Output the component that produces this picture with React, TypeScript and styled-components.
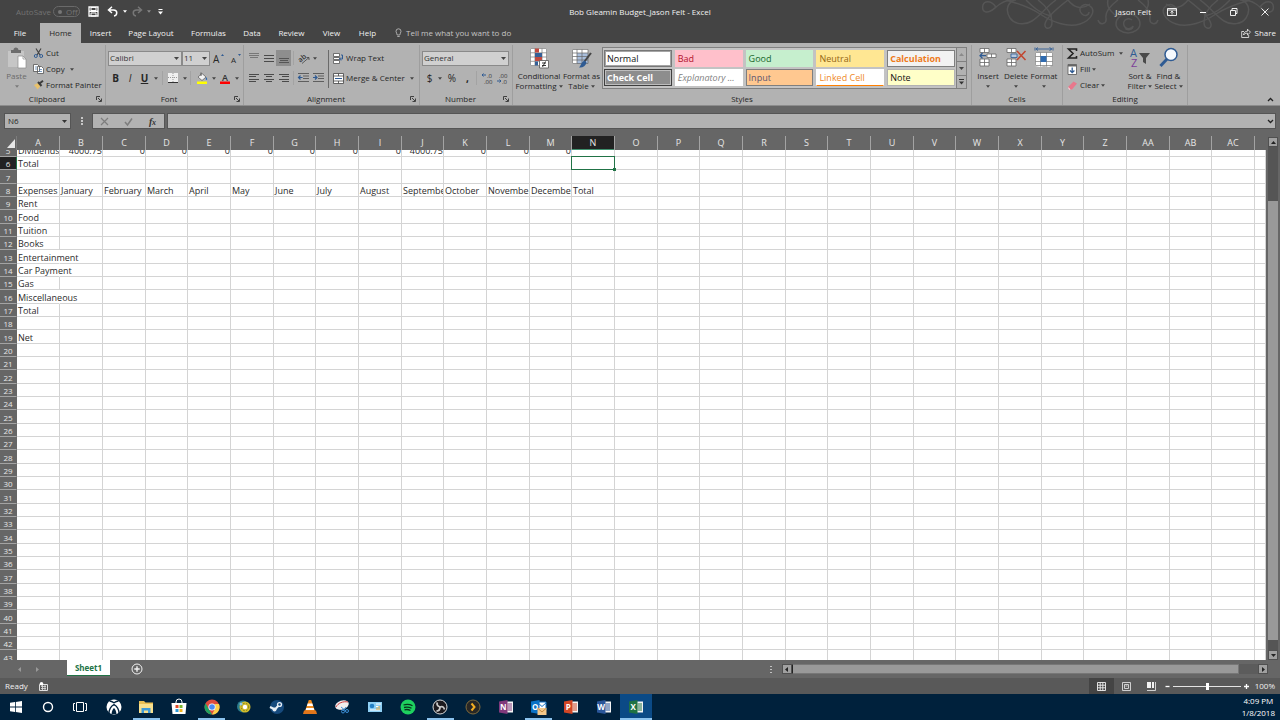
import React from "react";
import styled, { createGlobalStyle, css } from "styled-components";

const ui = `"Open Sans", "Noto Sans", sans-serif`;

const Global = createGlobalStyle`
  *, *::before, *::after { box-sizing: border-box; }
  html, body { margin: 0; height: 100%; }
  body { font-family: ${ui}; font-size: 8px; line-height: 12px; color: #262626; background: #666; overflow: hidden; }
  button, select, input { font: inherit; color: inherit; margin: 0; padding: 0; border: 0; background: none; border-radius: 0; }
  svg { display: block; flex: none; overflow: visible; }
`;

const Shell = styled.div`
  display: flex;
  flex-direction: column;
  height: 100vh;
  min-width: 0;
`;

/* ---------- title and tabs ---------- */
const Header = styled.header`
  position: relative;
  flex: none;
  background: #444;
  color: #f1f1f1;
`;
const Swirl = styled.svg`
  position: absolute;
  top: 0;
  right: 0;
  overflow: hidden;
  pointer-events: none;
`;
const TitleBar = styled.div`
  position: relative;
  display: grid;
  grid-template-columns: 1fr auto 1fr;
  align-items: center;
  height: 23px;
`;
const QuickAccess = styled.div`
  display: flex;
  align-items: center;
  padding-left: 16px;
  color: #737373;
`;
const AutoSave = styled.button`
  display: flex;
  align-items: center;
  gap: 2px;
  margin-right: 4px;
`;
const Toggle = styled.span`
  display: flex;
  align-items: center;
  gap: 4px;
  height: 11px;
  width: 27px;
  padding-left: 4px;
  border: 1px solid #6a6a6a;
  border-radius: 6px;
  line-height: 9px;
`;
const Dot = styled.i`
  width: 4px;
  height: 4px;
  border-radius: 50%;
  background: #777;
`;
const QuickButton = styled.button<{ $w: number }>`
  display: flex;
  justify-content: center;
  align-items: center;
  width: ${(p) => p.$w}px;
  height: 18px;
`;
const WindowTitle = styled.h1`
  margin: 0;
  font-size: 8px;
  font-weight: 400;
`;
const WindowControls = styled.div`
  display: flex;
  align-items: center;
  justify-content: flex-end;
`;
const UserName = styled.button`
  margin-right: 5px;
`;
const WindowButton = styled.button`
  display: flex;
  align-items: center;
  justify-content: center;
  width: 31px;
  height: 22px;
`;
const TabRow = styled.nav`
  position: relative;
  display: flex;
  align-items: stretch;
  height: 20px;
`;
const Tab = styled.button<{ $w: number; $active?: boolean }>`
  width: ${(p) => p.$w}px;
  white-space: nowrap;
  ${(p) => p.$active && css`background: #b2b2b2; color: #262626;`}
`;
const TellMe = styled.button`
  display: flex;
  align-items: center;
  gap: 4px;
  margin-left: 9px;
  color: #c4c4c4;
`;
const Share = styled.button`
  display: flex;
  align-items: center;
  gap: 4px;
  margin-left: auto;
  margin-right: 4px;
`;

/* ---------- ribbon ---------- */
const Ribbon = styled.div`
  display: flex;
  flex: none;
  height: 63px;
  padding-top: 2px;
  background: #b2b2b2;
  border-bottom: 1px solid #8c8c8c;
`;
const Group = styled.section<{ $w: number }>`
  display: flex;
  flex-direction: column;
  flex: none;
  width: ${(p) => p.$w}px;
  border-right: 1px solid #9e9e9e;
`;
const GroupBody = styled.div<{ $pad?: number }>`
  display: flex;
  flex: 1;
  padding-left: ${(p) => p.$pad ?? 0}px;
`;
const GroupFoot = styled.div<{ $launch?: boolean }>`
  display: grid;
  grid-template-columns: 1fr ${(p) => (p.$launch ? "11px" : "0px")};
  align-items: center;
  height: 12px;
  text-align: center;
`;
const Launcher = styled.button`
  display: flex;
  padding: 2px;
`;
const Stack = styled.div<{ $w?: number; $top?: number }>`
  display: flex;
  flex-direction: column;
  width: ${(p) => (p.$w ? p.$w + "px" : "auto")};
  padding-top: ${(p) => p.$top ?? 0}px;
`;
const Row = styled.div<{ $h: number }>`
  display: flex;
  align-items: center;
  height: ${(p) => p.$h}px;
`;
const Command = styled.button`
  display: flex;
  align-items: center;
  gap: 2px;
  height: 16px;
  white-space: nowrap;
`;
const CommandCaret = styled.span`
  margin-left: 3px;
`;
const IconButton = styled.button<{ $w: number; $on?: boolean }>`
  display: flex;
  align-items: center;
  justify-content: center;
  flex: none;
  width: ${(p) => p.$w}px;
  height: 16px;
  background: ${(p) => (p.$on ? "#8e8e8e" : "none")};
`;
const Glyph = styled(IconButton)<{ $italic?: boolean; $under?: boolean; $bold?: boolean }>`
  font-size: 10px;
  font-weight: ${(p) => (p.$bold ? 700 : 400)};
  font-style: ${(p) => (p.$italic ? "italic" : "normal")};
  text-decoration: ${(p) => (p.$under ? "underline" : "none")};
`;
const Sep = styled.i<{ $dark?: boolean }>`
  flex: none;
  width: 1px;
  height: ${(p) => (p.$dark ? 38 : 14)}px;
  margin: 0 2px;
  background: ${(p) => (p.$dark ? "#6a6a6a" : "#a3a3a3")};
`;
const BigButton = styled.button<{ $w: number; $dim?: boolean }>`
  display: flex;
  flex-direction: column;
  align-items: center;
  flex: none;
  width: ${(p) => p.$w}px;
  padding-top: 2px;
  line-height: 10px;
  white-space: nowrap;
  color: ${(p) => (p.$dim ? "#6b6b6b" : "#262626")};
  svg { margin-bottom: 2px; }
`;
const BigLine = styled.span`
  display: flex;
  align-items: center;
  gap: 2px;
  height: 10px;
  svg { margin: 0; }
`;
const SelectBox = styled.span<{ $w: number }>`
  position: relative;
  display: block;
  width: ${(p) => p.$w}px;
  height: 15px;
  border: 1px solid #8a8a8a;
  background: #d0d0d0;
  select {
    appearance: none;
    display: block;
    width: 100%;
    height: 13px;
    padding: 0 10px 0 1px;
    color: #333;
  }
  svg {
    position: absolute;
    right: 2px;
    top: 5px;
    pointer-events: none;
  }
`;

/* ---------- style gallery ---------- */
const Gallery = styled.div`
  display: flex;
  flex: none;
  width: 365px;
  height: 42px;
  margin-top: 2px;
  border: 1px solid #808080;
`;
const Swatches = styled.div`
  display: grid;
  grid-template-columns: repeat(5, 1fr);
  grid-template-rows: 17px 17px;
  gap: 2px 3px;
  flex: 1;
  padding: 2px 1px;
  background: #c3c3c3;
`;
const Swatch = styled.button<{ $bg: string; $fg: string; $edge?: string; $bold?: boolean; $italic?: boolean; $under?: boolean; $ring?: string }>`
  overflow: hidden;
  padding: 0 2px;
  border: 1px solid ${(p) => p.$edge ?? p.$bg};
  ${(p) => p.$under && css`border-bottom-color: #ff8001;`}
  ${(p) => p.$ring && css`box-shadow: inset 0 0 0 1px ${p.$ring};`}
  background: ${(p) => p.$bg};
  color: ${(p) => p.$fg};
  font-size: 9px;
  line-height: 13px;
  font-weight: ${(p) => (p.$bold ? 700 : 400)};
  font-style: ${(p) => (p.$italic ? "italic" : "normal")};
  text-align: left;
  white-space: nowrap;
`;
const GalleryScroll = styled.div`
  display: grid;
  grid-template-rows: repeat(3, 1fr);
  width: 10px;
  border-left: 1px solid #808080;
  button {
    display: flex;
    align-items: center;
    justify-content: center;
  }
  button + button { border-top: 1px solid #808080; }
`;
const RibbonEnd = styled.div`
  display: flex;
  flex: 1;
  align-items: flex-end;
  justify-content: flex-end;
  padding: 0 6px 3px 0;
`;

/* ---------- formula bar ---------- */
const FormulaRow = styled.div`
  display: flex;
  flex: none;
  align-items: center;
  height: 30px;
  padding: 0 4px;
`;
const NameBox = styled.label`
  display: flex;
  align-items: center;
  width: 67px;
  height: 16px;
  padding: 0 3px;
  background: #b2b2b2;
  border: 1px solid #555;
  input { flex: 1; min-width: 0; outline: none; }
`;
const Grip = styled.span`
  display: flex;
  flex: none;
  justify-content: center;
  width: 21px;
`;
const FormulaTools = styled.div`
  display: flex;
  align-items: center;
  justify-content: space-around;
  width: 73px;
  height: 16px;
  margin-right: 2px;
  background: #b2b2b2;
  border: 1px solid #555;
  button { padding: 2px 6px; }
`;
const FormulaBox = styled.div`
  display: flex;
  flex: 1;
  align-items: center;
  height: 16px;
  padding-right: 1px;
  background: #b2b2b2;
  border: 1px solid #555;
  input { flex: 1; outline: none; }
`;

/* ---------- sheet ---------- */
const Work = styled.main`
  display: flex;
  flex: 1;
  min-height: 0;
`;
const SheetPane = styled.div`
  display: flex;
  flex: 1;
  flex-direction: column;
  min-width: 0;
`;
const HeadTable = styled.table`
  flex: none;
  width: 100%;
  table-layout: fixed;
  border-collapse: separate;
  border-spacing: 0;
  color: #e6e6e6;
`;
const ColHead = styled.th<{ $on?: boolean }>`
  height: 14px;
  padding: 0;
  font-weight: 400;
  font-size: 9px;
  line-height: 12px;
  border-right: 1px solid #a3a3a3;
  ${(p) => p.$on && css`background: #222; box-shadow: inset 0 -1px #3f8f6d;`}
`;
const Corner = styled.th`
  padding: 0;
  border-right: 1px solid #7c7c7c;
  svg { margin-left: auto; }
`;
const Scroller = styled.div`
  flex: 1;
  min-height: 0;
  overflow: hidden;
  background: #fff;
`;
const Cells = styled.table`
  width: 100%;
  margin-top: -6px;
  table-layout: fixed;
  border-collapse: separate;
  border-spacing: 0;
  font-size: 9px;
  line-height: 11px;
  color: #2b2b2b;
  tr { height: 13px; }
  tr:nth-child(3n) { height: 14px; }
`;
const RowHead = styled.th<{ $on?: boolean }>`
  padding: 1px 0 0;
  font-size: 8px;
  font-weight: 400;
  text-align: center;
  color: #e6e6e6;
  background: ${(p) => (p.$on ? "#222" : "#666")};
  border-bottom: 1px solid #a3a3a3;
  border-right: 1px solid ${(p) => (p.$on ? "#217346" : "#666")};
`;
const Cell = styled.td<{ $right?: boolean; $spill?: boolean; $on?: boolean }>`
  padding: 1px 0 0 1px;
  white-space: nowrap;
  overflow: ${(p) => (p.$spill || p.$on ? "visible" : "hidden")};
  text-align: ${(p) => (p.$right ? "right" : "left")};
  border-right: 1px solid ${(p) => (p.$spill ? "transparent" : "#d4d4d4")};
  border-bottom: 1px solid #d4d4d4;
  ${(p) => p.$on && css`
    position: relative;
    &::before {
      content: "";
      position: absolute;
      inset: -1px;
      border: 1px solid #217346;
    }
    &::after {
      content: "";
      position: absolute;
      right: -2px;
      bottom: -2px;
      width: 3px;
      height: 3px;
      background: #217346;
    }
  `}
`;
const VScroll = styled.div`
  display: flex;
  flex: none;
  flex-direction: column;
  width: 14px;
  padding: 1px 2px 0;
`;
const ScrollButton = styled.button`
  display: flex;
  align-items: center;
  justify-content: center;
  flex: none;
  width: 10px;
  height: 10px;
  background: #a0a0a0;
  border: 1px solid #505050;
`;
const VTrack = styled.div`
  display: grid;
  grid-template-rows: 54fr 440fr 10fr;
  flex: 1;
  background: #555;
`;
const Thumb = styled.i`
  grid-row: 2;
  background: #999;
`;

/* ---------- sheet tabs ---------- */
const SheetBar = styled.div`
  display: flex;
  flex: none;
  align-items: center;
  height: 18px;
  padding-right: 12px;
`;
const SheetNav = styled.div`
  display: flex;
  width: 67px;
  padding-left: 17px;
  gap: 13px;
`;
const SheetTab = styled.button`
  align-self: flex-start;
  width: 43px;
  height: 16px;
  background: #fff;
  border-bottom: 1px solid #217346;
  color: #217346;
  font-weight: 700;
`;
const AddSheet = styled.button`
  margin-left: 21px;
`;
const HScroll = styled.div`
  display: flex;
  align-items: center;
  width: 40%;
  margin-left: auto;
`;
const HTrack = styled.div`
  display: flex;
  flex: 1;
  height: 10px;
  background: #5c5c5c;
`;
const HThumb = styled.i`
  width: 96%;
  background: #999;
  border: 1px solid #777;
  border-left-color: #222;
`;

/* ---------- status bar ---------- */
const StatusBar = styled.footer`
  display: flex;
  flex: none;
  align-items: center;
  height: 16px;
  padding: 0 5px;
  background: #595959;
  color: #f1f1f1;
`;
const MacroButton = styled.button`
  margin-left: 11px;
`;
const Views = styled.div`
  display: flex;
  margin-left: auto;
`;
const ViewButton = styled.button<{ $on?: boolean }>`
  display: flex;
  align-items: center;
  justify-content: center;
  width: 25px;
  height: 16px;
  background: ${(p) => (p.$on ? "#444" : "none")};
`;
const Zoom = styled.input`
  appearance: none;
  width: 68px;
  height: 10px;
  margin: 0 2px;
  background: linear-gradient(#e3e3e3, #e3e3e3) center / 100% 1px no-repeat;
  &::-webkit-slider-thumb {
    appearance: none;
    width: 3px;
    height: 7px;
    background: #fff;
  }
`;
const ZoomStep = styled.button`
  display: flex;
  justify-content: center;
  width: 7px;
`;
const Percent = styled.button`
  width: 25px;
  text-align: right;
`;

/* ---------- taskbar ---------- */
const TaskBar = styled.footer`
  display: flex;
  flex: none;
  height: 26px;
  background: #00213c;
  color: #fff;
`;
const System = styled.div`
  display: flex;
  margin-right: 1px;
`;
const TaskList = styled.div`
  display: flex;
`;
const TaskButton = styled.button<{ $open?: boolean; $active?: boolean }>`
  display: flex;
  align-items: center;
  justify-content: center;
  width: 33px;
  &:nth-child(3n + 2) { width: 32px; }
  background: ${(p) => (p.$active ? "#0b4a86" : "none")};
  ${(p) => p.$open && css`
    background-image: linear-gradient(#8cc3ee, #8cc3ee);
    background-size: ${p.$active ? "100%" : "27px"} 2px;
    background-position: bottom;
    background-repeat: no-repeat;
  `}
`;
const SystemButton = styled(TaskButton)`
  width: 32px;
`;
const Clock = styled.time`
  margin-left: auto;
  padding: 1px 5px 0 0;
  line-height: 12px;
  text-align: center;
  span { display: block; }
`;

/* ---------- drawings ---------- */
const Caret = ({ c = "#444", w = 5 }: { c?: string; w?: number }) => (
  <svg width={w} height="3" viewBox="0 0 5 3"><path d="M0 0h5L2.500 3z" fill={c} /></svg>
);
const Box = ({ w = 12, h = 12, children }: { w?: number; h?: number; children: React.ReactNode }) => (
  <svg width={w} height={h} viewBox={`0 0 ${w} ${h}`} fill="none">{children}</svg>
);
const Lines = ({ rows, c = "#4a4a4a" }: { rows: number[][]; c?: string }) => (
  <Box w={10} h={10}>{rows.map(([x, y, w], i) => <path key={i} d={`M${x} ${y}.5h${w}`} stroke={c} />)}</Box>
);
const Foot = ({ name, launch }: { name: string; launch?: boolean }) => (
  <GroupFoot $launch={launch}>
    <span>{name}</span>
    {launch && (
      <Launcher aria-label={`${name} settings`}>
        <Box w={6} h={6}><path d="M.5 4V.5H4M2 2l3 3M5.500 2.500v3h-3" stroke="#333" strokeWidth=".9" /></Box>
      </Launcher>
    )}
  </GroupFoot>
);
const Combo = ({ w, label, value }: { w: number; label: string; value: string }) => (
  <SelectBox $w={w}>
    <select aria-label={label} defaultValue={value}><option>{value}</option></select>
    <Caret />
  </SelectBox>
);
const Office = ({ c, t }: { c: string; t: string }) => (
  <Box w={16} h={16}>
    <path d="M8 2.500h7v11H8z" fill="#f4f4f4" />
    <path d="M9.500 5h4.500M9.500 7h4.500M9.500 9h4.500M9.500 11h4.500" stroke={c} strokeWidth="1.100" />
    <path d="M1 2.500L9.500 1v14L1 13.500z" fill={c} />
    <text x="5.200" y="11" fontSize="8" fontWeight="700" fill="#fff" textAnchor="middle" fontFamily="Open Sans, sans-serif">{t}</text>
  </Box>
);
const Flourish = () => (
  <>
    <path d="M16 8C15 4 10 1 6 2s-5 9 0 10 8-4 14-8 10-4 16-4" />
    <path d="M34 0c-8 4-8 12-4 18s14 8 22 3S66 7 76 0" />
    <path d="M26 0c10 3 22 6 34 14s28 14 40 10c12-4 16-14 10-18s-14 2-8 8c3 3 7 1 7-2" />
    <path d="M46 0c6 6 14 14 26 16M58 0c8 6 14 14 14 22 0 8-8 8-7 2S75 10 88 0M88 0c6 8 14 10 22 4" />
    <path d="M118 20c2 6 9 4 8-2s4-12 12-18M128 0c-2 8 4 12 8 16" />
    <path d="M148 14c-8 0-12 5-12 10s6 9 12 9" />
  </>
);

const tabs: [string, number][] = [
  ["File", 40], ["Home", 41], ["Insert", 39], ["Page Layout", 62], ["Formulas", 53],
  ["Data", 34], ["Review", 45], ["View", 35], ["Help", 37],
];

const letters = Array.from({ length: 29 }, (_, i) =>
  i < 26 ? String.fromCharCode(65 + i) : "A" + String.fromCharCode(39 + i));
const rowNumbers = Array.from({ length: 39 }, (_, i) => i + 5);
const months = ["January", "February", "March", "April", "May", "June", "July", "August", "September", "October", "November", "December", "Total"];
const firstColumn: Record<number, string> = {
  5: "Dividends", 6: "Total", 8: "Expenses", 9: "Rent", 10: "Food", 11: "Tuition", 12: "Books",
  13: "Entertainment", 14: "Car Payment", 15: "Gas", 16: "Miscellaneous", 17: "Total", 19: "Net",
};
const valueAt = (row: number, col: number) => {
  if (col === 0) return firstColumn[row] ?? "";
  if (row === 5 && col <= 12) return col === 1 || col === 9 ? "4000.75" : "0";
  if (row === 8 && col <= 13) return months[col - 1];
  return "";
};
const Columns = () => (
  <colgroup>
    <col style={{ width: 17 }} />
    {letters.map((l, i) => <col key={l} style={{ width: i > 0 && i % 3 === 0 ? 42 : 43 }} />)}
    <col />
  </colgroup>
);

const TitleArea = () => (
  <Header>
    <Swirl width="300" height="36" viewBox="0 0 300 36" fill="none" stroke="#555" strokeWidth="1.500">
      <Flourish />
      <g transform="translate(296 0) scale(-1 1)"><Flourish /></g>
      <path d="M152 20a5 5 0 1 0 1 6c0 4-6 5-8 2" />
    </Swirl>
    <TitleBar>
      <QuickAccess>
        <AutoSave>AutoSave<Toggle><Dot />Off</Toggle></AutoSave>
        <QuickButton $w={20} aria-label="Save">
          <Box w={11} h={11}><path d="M1 1h9v9H1z" stroke="#fff" strokeWidth="1.300" /><path d="M3 1.500h5v3H3zM3 7h5v3H3z" stroke="#fff" /><path d="M1 4.500h9v1.500H1z" fill="#fff" /></Box>
        </QuickButton>
        <QuickButton $w={18} aria-label="Undo">
          <Box w={11} h={11}><path d="M5 .8L1.500 4 5 7M2 4h4.500c4.500 0 4 5.500.5 6" stroke="#fff" strokeWidth="1.500" /></Box>
        </QuickButton>
        <QuickButton $w={7} aria-label="Undo list"><Caret c="#fff" w={4} /></QuickButton>
        <QuickButton $w={17} aria-label="Redo">
          <Box w={11} h={11}><path d="M6 .8L9.500 4 6 7M9 4H4.500C0 4 .5 9.500 4 10" stroke="#777" strokeWidth="1.500" /></Box>
        </QuickButton>
        <QuickButton $w={7} aria-label="Redo list"><Caret c="#888" w={4} /></QuickButton>
        <QuickButton $w={16} aria-label="Customize">
          <Box w={5} h={6}><path d="M.5 .5h4" stroke="#fff" /><path d="M0 2.500h5L2.500 5.500z" fill="#fff" /></Box>
        </QuickButton>
      </QuickAccess>
      <WindowTitle>Bob Gleamin Budget_Jason Felt - Excel</WindowTitle>
      <WindowControls>
        <UserName>Jason Felt</UserName>
        <WindowButton aria-label="Ribbon options"><Box w={10} h={8}><path d="M.5.5h9v7h-9zM.5 2h9M5 6.500v-3M3.500 4.500L5 3.200l1.500 1.300" stroke="#fff" strokeWidth=".9" /></Box></WindowButton>
        <WindowButton aria-label="Minimize"><Box w={8} h={8}><path d="M1 4.500h6" stroke="#fff" /></Box></WindowButton>
        <WindowButton aria-label="Restore"><Box w={8} h={8}><path d="M.5 2.500h5v5h-5zM2 2.500V.5h5v5H5.500" stroke="#fff" strokeWidth=".9" /></Box></WindowButton>
        <WindowButton aria-label="Close"><Box w={8} h={8}><path d="M.5.5l7 7M7.500.5l-7 7" stroke="#fff" strokeWidth=".9" /></Box></WindowButton>
      </WindowControls>
    </TitleBar>
    <TabRow>
      {tabs.map(([name, w]) => <Tab key={name} $w={w} $active={name === "Home"}>{name}</Tab>)}
      <TellMe>
        <Box w={7} h={10}><path d="M2.200 7C2.200 5.500 1 5 1 3.300a2.500 2.500 0 0 1 5 0C6 5 4.800 5.500 4.800 7zM2.300 8.500h2.400" stroke="#c4c4c4" strokeWidth=".8" /></Box>
        Tell me what you want to do
      </TellMe>
      <Share>
        <Box w={10} h={10}><path d="M3 3.500H.7v6h7V7M2.500 7c.3-2.500 1.800-3.800 4-3.800V1.200l3 3-3 2.800V5.200c-2 0-3 .5-4 1.800z" stroke="#f1f1f1" strokeWidth=".8" /></Box>
        Share
      </Share>
    </TabRow>
  </Header>
);

const ClipboardGroup = () => (
  <Group $w={106}>
    <GroupBody>
      <BigButton $w={33} $dim>
        <Box w={20} h={22}><path d="M1 4h16v16H1z" fill="#c6c6c6" /><path d="M4 3h2.500a2.500 2.500 0 0 1 5 0H14v3H4z" fill="#6c6c6c" /><path d="M11 9h5l3 3v9h-8z" fill="#fff" stroke="#8b8b8b" strokeWidth=".7" /><path d="M16 9v3h3" stroke="#8b8b8b" strokeWidth=".7" /></Box>
        <BigLine>Paste</BigLine><BigLine><Caret c="#7a7a7a" w={4} /></BigLine>
      </BigButton>
      <Stack>
        <Command><Box w={11} h={10}><path d="M3 .5l4 6.500M8 .5L4 7" stroke="#444" strokeWidth="1.200" /><circle cx="2.800" cy="8" r="1.500" stroke="#2f5b93" /><circle cx="8.200" cy="8" r="1.500" stroke="#2f5b93" /></Box>Cut</Command>
        <Command><Box w={11} h={10}><path d="M.5.500h4l2 2v5h-6zM4.500 2.500h4l2 2v5h-6z" fill="#fff" stroke="#555" strokeWidth=".8" /><path d="M6 5.500h3M6 7.500h3M2 3h2M2 5h2" stroke="#4472a8" strokeWidth=".7" /></Box>Copy<CommandCaret><Caret w={4} /></CommandCaret></Command>
        <Command><Box w={11} h={10}><path d="M1 5l4-2 2.500 3-3 3.500c-.7-1.500-2-3-3.500-4.500z" fill="#e9c26c" /><path d="M5 2l3.500 4M6.500 3.500L10 .8" stroke="#3c3c3c" strokeWidth="2" /></Box>Format Painter</Command>
      </Stack>
    </GroupBody>
    <Foot name="Clipboard" launch />
  </Group>
);

const FontGroup = () => (
  <Group $w={138}>
    <GroupBody $pad={2}>
      <Stack $top={4}>
        <Row $h={18}>
          <Combo w={74} label="Font" value="Calibri" />
          <Combo w={28} label="Font size" value="11" />
          <IconButton $w={18} aria-label="Grow font"><Box w={12} h={11}><text x="0" y="10" fontSize="10" fill="#262626" fontFamily="Open Sans, sans-serif">A</text><path d="M8 3l1.500-2L11 3z" fill="#2f5b93" /></Box></IconButton>
          <IconButton $w={14} aria-label="Shrink font"><Box w={11} h={11}><text x="1" y="10" fontSize="8" fill="#262626" fontFamily="Open Sans, sans-serif">A</text><path d="M8 1h3L9.500 3z" fill="#2f5b93" /></Box></IconButton>
        </Row>
        <Row $h={22}>
          <Glyph $w={15} $bold>B</Glyph><Glyph $w={14} $italic>I</Glyph><Glyph $w={15} $under $bold>U</Glyph>
          <IconButton $w={8} aria-label="Underline list"><Caret w={4} /></IconButton>
          <Sep />
          <IconButton $w={16} aria-label="Borders"><Box w={10} h={10}><path d="M0 0h10v9H0z" fill="#f0f0f0" /><path d="M5 0v9M0 4.500h10" stroke="#999" strokeDasharray="1 1" /><path d="M0 9.500h10" stroke="#333" /></Box></IconButton>
          <IconButton $w={7} aria-label="Border list"><Caret w={4} /></IconButton>
          <Sep />
          <IconButton $w={17} aria-label="Fill color"><Box w={12} h={12}><path d="M2 5l4-3.500 4 3.500-4 3.500z" fill="#f5f5f5" stroke="#555" strokeWidth=".7" /><path d="M10 5c1.500 1 1.500 3 .5 3s-1-1.500-.5-3z" fill="#2f6bb0" /><path d="M5 4V.5" stroke="#555" /><path d="M1 9.500h10v2.500H1z" fill="#ff0" /></Box></IconButton>
          <IconButton $w={7} aria-label="Fill list"><Caret w={4} /></IconButton>
          <IconButton $w={16} aria-label="Font color"><Box w={12} h={12}><text x="6" y="8.500" fontSize="9" fontWeight="600" fill="#333" textAnchor="middle" fontFamily="Open Sans, sans-serif">A</text><path d="M1 9.500h10v2.500H1z" fill="red" /></Box></IconButton>
          <IconButton $w={7} aria-label="Font color list"><Caret w={4} /></IconButton>
        </Row>
      </Stack>
    </GroupBody>
    <Foot name="Font" launch />
  </Group>
);

const AlignmentGroup = () => (
  <Group $w={176}>
    <GroupBody $pad={2}>
      <Stack $top={4} $w={80}>
        <Row $h={18}>
          <IconButton $w={15} aria-label="Top align"><Lines c="#777" rows={[[0, 0, 10], [0, 2, 10], [1, 4, 8]]} /></IconButton>
          <IconButton $w={15} aria-label="Middle align"><Lines rows={[[0, 2, 10], [0, 5, 10], [0, 8, 10]]} /></IconButton>
          <IconButton $w={15} $on aria-label="Bottom align"><Lines c="#555" rows={[[0, 5, 10], [1, 7, 8], [0, 9, 10]]} /></IconButton>
          <Sep />
          <IconButton $w={16} aria-label="Orientation"><Box w={12} h={11}><g transform="rotate(-40 4 7)"><text x="1" y="8" fontSize="7" fontWeight="600" fill="#333" fontFamily="Open Sans, sans-serif">ab</text></g><path d="M4 10.500L11 4.500M11 7V4.500H8.500" stroke="#444" strokeWidth=".8" /></Box></IconButton>
          <IconButton $w={6} aria-label="Orientation list"><Caret w={4} /></IconButton>
        </Row>
        <Row $h={22}>
          <IconButton $w={15} aria-label="Align left"><Lines rows={[[0, 1, 10], [0, 3, 7], [0, 6, 10], [0, 8, 7]]} /></IconButton>
          <IconButton $w={15} aria-label="Center"><Lines rows={[[0, 1, 10], [2, 3, 6], [0, 6, 10], [2, 8, 6]]} /></IconButton>
          <IconButton $w={15} aria-label="Align right"><Lines rows={[[0, 1, 10], [3, 3, 7], [0, 6, 10], [3, 8, 7]]} /></IconButton>
          <Sep />
          <IconButton $w={15} aria-label="Decrease indent"><Box w={11} h={10}><path d="M0 .5h11M5 3h6M5 5.500h6M0 8.500h11" stroke="#555" strokeWidth=".9" /><path d="M4.500 4.500H1M2.500 2.500l-2 2 2 2" stroke="#2f5b93" strokeWidth="1.200" /></Box></IconButton>
          <IconButton $w={15} aria-label="Increase indent"><Box w={11} h={10}><path d="M0 .5h11M5 3h6M5 5.500h6M0 8.500h11" stroke="#555" strokeWidth=".9" /><path d="M0 4.500h3.500M2 2.500l2 2-2 2" stroke="#2f5b93" strokeWidth="1.200" /></Box></IconButton>
        </Row>
      </Stack>
      <Stack $top={5}><Sep $dark /></Stack>
      <Stack $top={4}>
        <Row $h={18}><Command><Box w={13} h={11}><path d="M2.500.500h6v3h-6zM2.500 4.500h6v2h-6zM2.500 7.500h6v3h-6z" fill="#fff" stroke="#555" strokeWidth=".8" /><path d="M10 2h1.500v4H8.500M10 4.500L8.500 6 10 7.500" stroke="#2f5b93" /></Box>Wrap Text</Command></Row>
        <Row $h={22}><Command><Box w={13} h={11}><path d="M2.500.500h10v10h-10z" fill="#fff" stroke="#444" strokeWidth=".8" /><path d="M2.500 3h10M2.500 8h10M7.500.5V3M7.500 8v2.500" stroke="#444" strokeWidth=".8" /><path d="M4 5.500h7" stroke="#2f5b93" /></Box>Merge &amp; Center<CommandCaret><Caret w={4} /></CommandCaret></Command></Row>
      </Stack>
    </GroupBody>
    <Foot name="Alignment" launch />
  </Group>
);

const NumberGroup = () => (
  <Group $w={93}>
    <GroupBody $pad={2}>
      <Stack $top={4}>
        <Row $h={18}><Combo w={87} label="Number format" value="General" /></Row>
        <Row $h={22}>
          <Glyph $w={15}>$</Glyph><IconButton $w={6} aria-label="Currency list"><Caret w={4} /></IconButton>
          <Glyph $w={18}>%</Glyph><Glyph $w={13} $bold>,</Glyph><Sep />
          {["Increase", "Decrease"].map((k) => (
            <IconButton key={k} $w={15} aria-label={`${k} decimal`}>
              <Box w={12} h={12}>
                <text x={k === "Increase" ? 6 : 3} y="5.500" fontSize="6" fill="#333" fontFamily="Open Sans, sans-serif">{k === "Increase" ? ".0" : ".00"}</text>
                <text x={k === "Increase" ? 3 : 6} y="11.500" fontSize="6" fill="#333" fontFamily="Open Sans, sans-serif">{k === "Increase" ? ".00" : ".0"}</text>
                <path d={k === "Increase" ? "M5 3H1M2.500 1.500L1 3l1.500 1.500" : "M1 9h4M3.500 7.500L5 9l-1.500 1.500"} stroke="#2f5b93" />
              </Box>
            </IconButton>
          ))}
        </Row>
      </Stack>
    </GroupBody>
    <Foot name="Number" launch />
  </Group>
);

const StylesGroup = () => (
  <Group $w={459}>
    <GroupBody $pad={4}>
      <BigButton $w={44}>
        <Box w={20} h={22}>
          <path d="M1 1h17v18H1z" fill="#fff" /><path d="M1.500 1.500h16v17h-16zM1.500 5.800h16M1.500 10h16M1.500 14.300h16M6 1.500v17M13 1.500v17" stroke="#777" strokeWidth=".7" />
          <path d="M6 1.500h4v4H6zM6 10h7v4H6z" fill="#c0493f" /><path d="M6 6h7v4H6zM6 14.500h3v4H6z" fill="#355f96" />
          <path d="M10.500 13.500h9v7.500h-9z" fill="#fff" stroke="#555" strokeWidth=".8" /><path d="M13 16h4M13 18.500h4M16.500 14.500l-3 5.500" stroke="#222" strokeWidth=".9" />
        </Box>
        <BigLine>Conditional</BigLine><BigLine>Formatting<Caret w={4} /></BigLine>
      </BigButton>
      <BigButton $w={41}>
        <Box w={21} h={22}><path d="M1 2h16v15H1z" fill="#fff" /><path d="M6 6h11v11H6z" fill="#a9bedb" /><path d="M1.500 2.500h15.500v14H1.500zM1.500 6h15.500M1.500 9.500h15.500M1.500 13h15.500M6 2.500v14M11 2.500v14" stroke="#666" strokeWidth=".7" /><path d="M20 6l-6.500 8.500" stroke="#444" strokeWidth="2" /><path d="M13.500 13.500l2 2c-1 4-4 5.500-7.500 5 2-1.500 2-5.500 5.500-7z" fill="#2f5b93" /></Box>
        <BigLine>Format as</BigLine><BigLine>Table<Caret w={4} /></BigLine>
      </BigButton>
      <Gallery>
        <Swatches>
          <Swatch $bg="#fff" $fg="#111" $edge="#777" $ring="#a5a5a5">Normal</Swatch>
          <Swatch $bg="#ffc0cb" $fg="#b3122c">Bad</Swatch>
          <Swatch $bg="#c6efce" $fg="#17662a">Good</Swatch>
          <Swatch $bg="#ffe793" $fg="#946412">Neutral</Swatch>
          <Swatch $bg="#f2f2f2" $fg="#ee7a1b" $edge="#7f7f7f" $bold>Calculation</Swatch>
          <Swatch $bg="#8d8d8d" $fg="#fff" $edge="#3f3f3f" $bold $ring="#bdbdbd">Check Cell</Swatch>
          <Swatch $bg="#fff" $fg="#7f7f7f" $italic>Explanatory ...</Swatch>
          <Swatch $bg="#ffc890" $fg="#5b5670" $edge="#7f7f7f">Input</Swatch>
          <Swatch $bg="#fff" $fg="#ee8a2a" $under>Linked Cell</Swatch>
          <Swatch $bg="#ffffc8" $fg="#111" $edge="#b2b2b2">Note</Swatch>
        </Swatches>
        <GalleryScroll>
          <button aria-label="Previous styles"><Box w={5} h={3}><path d="M0 3h5L2.500 0z" fill="#8a8a8a" /></Box></button>
          <button aria-label="Next styles"><Caret /></button>
          <button aria-label="More styles"><Box w={5} h={6}><path d="M0 .5h5" stroke="#333" /><path d="M0 2.500h5L2.500 5.500z" fill="#333" /></Box></button>
        </GalleryScroll>
      </Gallery>
    </GroupBody>
    <Foot name="Styles" />
  </Group>
);

const CellsGroup = () => (
  <Group $w={91}>
    <GroupBody $pad={2}>
      <BigButton $w={28}>
        <Box w={20} h={22}><path d="M2 1.500h9v4H2zM2 12h9v7H2zM9 7h9v3.500H9z" fill="#fff" stroke="#666" strokeWidth=".8" /><path d="M6.500 1.500v4M6.500 12v7M2 15.500h9M13.500 7v3.500" stroke="#666" strokeWidth=".8" /><path d="M8 8.700H2M4.500 6L2 8.700l2.500 2.700" stroke="#2f5b93" strokeWidth="1.300" /></Box>
        <BigLine>Insert</BigLine><BigLine><Caret w={4} /></BigLine>
      </BigButton>
      <BigButton $w={28}>
        <Box w={20} h={22}><path d="M1 1.500h9v4H1zM1 12h9v7H1z" fill="#fff" stroke="#666" strokeWidth=".8" /><path d="M5.500 1.500v4M5.500 12v7M1 15.500h9" stroke="#666" strokeWidth=".8" /><path d="M5 7h6v3.500H5z" fill="#b7c9e2" stroke="#2f5b93" strokeWidth=".8" /><path d="M11 4l8.500 9M19.500 4L11 13" stroke="#c2452f" strokeWidth="1.500" /></Box>
        <BigLine>Delete</BigLine><BigLine><Caret w={4} /></BigLine>
      </BigButton>
      <BigButton $w={28}>
        <Box w={20} h={22}><path d="M1 5h18v13l-4 2-5-1-4 1-5-1z" fill="#fff" /><path d="M1.500 5.500h17v13h-17zM1.500 9.500h17M1.500 14.500h17M6.500 5.500v14M12.500 5.500v14" stroke="#777" strokeWidth=".7" /><path d="M6.500 9h6v6h-6z" fill="#2f6bb0" /><path d="M2 2h15M4 .5L2 2l2 1.500M15.500.5L18 2l-2.500 1.500M1 .5v3M19 .5v3" stroke="#2f5b93" strokeWidth=".9" /></Box>
        <BigLine>Format</BigLine><BigLine><Caret w={4} /></BigLine>
      </BigButton>
    </GroupBody>
    <Foot name="Cells" />
  </Group>
);

const EditingGroup = () => (
  <Group $w={125}>
    <GroupBody $pad={4}>
      <Stack $w={59}>
        <Command><Box w={11} h={11}><path d="M9.500 3V1H1.500L6 5.500 1.500 10h8V8" stroke="#222" strokeWidth="1.600" /></Box>AutoSum<CommandCaret><Caret w={4} /></CommandCaret></Command>
        <Command><Box w={11} h={11}><path d="M1 .5h8.500v10H1z" fill="#fff" stroke="#555" strokeWidth=".8" /><path d="M1 .5h8.500v2H1z" fill="#666" /><path d="M5.200 3.500v5M3 6.500l2.200 2.200 2.200-2.200" stroke="#2f5b93" strokeWidth="1.300" /></Box>Fill<Caret w={4} /></Command>
        <Command><Box w={11} h={11}><path d="M1 7l5.500-5.500 3.500 2L5 9.500H2z" fill="#e8788c" /><path d="M1 7l2.500 2.500H2z" fill="#fff" /></Box>Clear<Caret w={4} /></Command>
      </Stack>
      <BigButton $w={28}>
        <Box w={20} h={22}><text x="0" y="10" fontSize="11" fill="#2f5b93" fontFamily="Open Sans, sans-serif">A</text><text x="1" y="20" fontSize="11" fill="#7d3f98" fontFamily="Open Sans, sans-serif">Z</text><path d="M9 6h11l-4 5v6l-3-2v-4z" fill="#4a4a4a" /></Box>
        <BigLine>Sort &amp;</BigLine><BigLine>Filter<Caret w={4} /></BigLine>
      </BigButton>
      <BigButton $w={29}>
        <Box w={20} h={22}><path d="M8 12l-6.500 7" stroke="#2f5b93" strokeWidth="3" /><circle cx="12" cy="7.500" r="6" fill="#f6f9fd" stroke="#2f5b93" strokeWidth="1.500" /></Box>
        <BigLine>Find &amp;</BigLine><BigLine>Select<Caret w={4} /></BigLine>
      </BigButton>
    </GroupBody>
    <Foot name="Editing" />
  </Group>
);

const TaskIcons = () => (
  <TaskList>
    <TaskButton aria-label="Xbox"><Box w={16} h={16}><circle cx="8" cy="8" r="7.500" fill="#fff" /><path d="M3 14.500C3 10.500 5.500 7 8 5.500c2.500 1.500 5 5 5 9M3.500 2C5.500 2 8 3.800 8 3.800S10.500 2 12.500 2" stroke="#00213c" strokeWidth="1.400" /><path d="M5.500 15c.3-3 1.300-5 2.500-6 1.200 1 2.200 3 2.500 6z" fill="#00213c" /></Box></TaskButton>
    <TaskButton $open aria-label="File Explorer"><Box w={16} h={16}><path d="M1 2h5l1.500 1.500H15V14H1z" fill="#e9bf55" /><path d="M1 5h14v9H1z" fill="#f8e08e" /><path d="M3.500 14V9h9v5h-2.500v-2.500H6V14z" fill="#3f9bd8" /></Box></TaskButton>
    <TaskButton aria-label="Store"><Box w={16} h={16}><path d="M5 5V3a3 3 0 0 1 6 0v2" stroke="#fff" /><path d="M.5 4h15l-1 11h-13z" fill="#fff" /><path d="M4.500 6h3v3h-3z" fill="#e04b2a" /><path d="M8.500 6h3v3h-3z" fill="#7cb82f" /><path d="M4.500 10h3v3h-3z" fill="#2e9ad8" /><path d="M8.500 10h3v3h-3z" fill="#f2b21d" /></Box></TaskButton>
    <TaskButton $open aria-label="Chrome"><Box w={16} h={16}><circle cx="8" cy="8" r="7.500" fill="#dd4b3e" /><path d="M1.500 4.300L5 10.500 8 15.500A7.500 7.500 0 0 1 1.500 4.300z" fill="#1da462" /><path d="M8 15.500L11.200 9.500 11 5h4a7.500 7.500 0 0 1-7 10.500z" fill="#fcd04b" /><circle cx="8" cy="8" r="3.600" fill="#fff" /><circle cx="8" cy="8" r="2.800" fill="#4a8af4" /></Box></TaskButton>
    <TaskButton aria-label="Media player"><Box w={16} h={16}><circle cx="7" cy="7.500" r="6" fill="#2a7c8d" /><circle cx="9" cy="8" r="5.500" fill="#d4bd2a" /><circle cx="9" cy="8" r="2.200" fill="#fff" /><circle cx="9" cy="8" r="3.700" stroke="#6d7a21" strokeDasharray="1.500 1.500" /><circle cx="5" cy="5" r="1.500" fill="#8ec9ef" /></Box></TaskButton>
    <TaskButton aria-label="Steam"><Box w={16} h={16}><circle cx="8" cy="8" r="7" fill="#164a7d" /><path d="M1 8l5 2.500 4.500-5" stroke="#e8eef5" strokeWidth="2.200" /><circle cx="10.500" cy="5.500" r="2.600" fill="#e8eef5" /><circle cx="10.500" cy="5.500" r="1.200" fill="#164a7d" /><circle cx="5.500" cy="10.500" r="2" fill="#e8eef5" /></Box></TaskButton>
    <TaskButton aria-label="VLC"><Box w={16} h={16}><path d="M6.800 1h2.400L13 12H3z" fill="#f08b1d" /><path d="M5.700 4.500h4.600l.8 2.500H4.900zM4.300 9h7.400l.6 2H3.700z" fill="#fff" /><path d="M2 11.500h12l1 3.500H1z" fill="#e2761b" /></Box></TaskButton>
    <TaskButton aria-label="Snipping Tool"><Box w={16} h={16}><ellipse cx="8" cy="6" rx="7" ry="4.500" fill="#f1eeee" transform="rotate(-18 8 6)" /><path d="M2 8c2-4 7-6 12-5" stroke="#cf3c3c" /><path d="M7 8l5 4M12 8l-3 4" stroke="#3d8fd6" /><circle cx="9" cy="12.500" r="1.500" stroke="#3d8fd6" /><circle cx="13" cy="12" r="1.500" stroke="#3d8fd6" /></Box></TaskButton>
    <TaskButton aria-label="Control Panel"><Box w={16} h={16}><path d="M1 3h14v10H1z" fill="#8fd0f4" /><circle cx="5" cy="7" r="2.300" fill="#2480c4" /><path d="M9 5h5M9 7.500h3M3 11h10" stroke="#fff" /><path d="M12 7v4M10 8.500V11" stroke="#e8a431" /></Box></TaskButton>
    <TaskButton aria-label="Spotify"><Box w={16} h={16}><circle cx="8" cy="8" r="7.500" fill="#1ed15f" /><path d="M3.500 6c3-.9 6.500-.6 9 .8M4 8.500c2.600-.7 5.300-.4 7.500.8M4.500 10.800c2-.5 4.200-.3 6 .7" stroke="#06351a" strokeWidth="1.300" /></Box></TaskButton>
    <TaskButton $open aria-label="OBS"><Box w={16} h={16}><circle cx="8" cy="8" r="7" fill="#1c1a1e" stroke="#d8d8d8" /><path d="M8 8c-3-1-3.500-3-2.500-4.500M8 8c3-1 4 .5 4.500 2.500M8 8c0 3-1.500 4-3.500 4" stroke="#c9c9c9" strokeWidth="1.800" /></Box></TaskButton>
    <TaskButton aria-label="Plex"><Box w={16} h={16}><circle cx="8" cy="8" r="7" fill="#282725" stroke="#7e6a3c" /><path d="M6.500 4.500L9.500 8l-3 3.500" stroke="#f5ae22" strokeWidth="2" /></Box></TaskButton>
    <TaskButton aria-label="OneNote"><Office c="#80397b" t="N" /></TaskButton>
    <TaskButton $open aria-label="Outlook"><Box w={17} h={16}><path d="M8 3h8v8H8z" fill="#fff" stroke="#1b75c4" /><path d="M8 4l4 3.500L16 4" stroke="#1b75c4" /><path d="M1 2.500L9.500 1v14L1 13.500z" fill="#0a72c6" /><text x="5.200" y="11" fontSize="8" fontWeight="700" fill="#fff" textAnchor="middle" fontFamily="Open Sans, sans-serif">O</text><path d="M7.500 9h9v7h-9z" fill="#f4c88a" /><path d="M7.500 9l4.500 4 4.500-4" stroke="#b9792b" strokeWidth=".8" /></Box></TaskButton>
    <TaskButton aria-label="PowerPoint"><Office c="#d24625" t="P" /></TaskButton>
    <TaskButton aria-label="Word"><Office c="#2a5699" t="W" /></TaskButton>
    <TaskButton $open $active aria-label="Excel"><Office c="#1f7244" t="X" /></TaskButton>
  </TaskList>
);

export default function App() {
  return (
    <Shell>
      <Global />
      <TitleArea />
      <Ribbon>
        <ClipboardGroup /><FontGroup /><AlignmentGroup /><NumberGroup /><StylesGroup /><CellsGroup /><EditingGroup />
        <RibbonEnd><button aria-label="Collapse ribbon"><Box w={7} h={5}><path d="M1 4l2.500-2.500L6 4" stroke="#222" strokeWidth="1.300" /></Box></button></RibbonEnd>
      </Ribbon>
      <FormulaRow>
        <NameBox><input aria-label="Name box" defaultValue="N6" /><Caret c="#333" /></NameBox>
        <Grip><Box w={2} h={8}><path d="M1 0v8" stroke="#e8e8e8" strokeWidth="1.500" strokeDasharray="2 1" /></Box></Grip>
        <FormulaTools>
          <button aria-label="Cancel"><Box w={9} h={9}><path d="M1 1l7 7M8 1L1 8" stroke="#7d7d7d" strokeWidth="1.200" /></Box></button>
          <button aria-label="Enter"><Box w={9} h={9}><path d="M1 5l2.500 3L8 1.500" stroke="#7d7d7d" strokeWidth="1.500" /></Box></button>
          <button aria-label="Insert function"><Box w={9} h={11}><text x="1" y="9" fontSize="10" fontStyle="italic" fontWeight="700" fill="#333" fontFamily="Liberation Serif, serif">f</text><text x="4" y="9" fontSize="8" fontStyle="italic" fontWeight="700" fill="#333" fontFamily="Liberation Serif, serif">x</text></Box></button>
        </FormulaTools>
        <FormulaBox><input aria-label="Formula" /><button aria-label="Expand formula bar"><Box w={7} h={5}><path d="M1 1l2.500 2.500L6 1" stroke="#222" strokeWidth="1.300" /></Box></button></FormulaBox>
      </FormulaRow>
      <Work>
        <SheetPane>
          <HeadTable>
            <Columns />
            <thead><tr>
              <Corner><Box w={9} h={9}><path d="M8 0v9H0z" fill="#e8e8e8" /></Box></Corner>
              {letters.map((l) => <ColHead key={l} $on={l === "N"}>{l}</ColHead>)}
              <th />
            </tr></thead>
          </HeadTable>
          <Scroller>
            <Cells>
              <Columns />
              <tbody>
                {rowNumbers.map((r) => (
                  <tr key={r}>
                    <RowHead $on={r === 6}>{r}</RowHead>
                    {letters.map((l, c) => (
                      <Cell key={l} $right={r === 5 && c > 0} $spill={c === 0 && [13, 14, 16].includes(r)} $on={r === 6 && l === "N"}>{valueAt(r, c)}</Cell>
                    ))}
                    <Cell />
                  </tr>
                ))}
              </tbody>
            </Cells>
          </Scroller>
        </SheetPane>
        <VScroll>
          <ScrollButton aria-label="Scroll up"><Box w={5} h={3}><path d="M0 3h5L2.500 0z" fill="#222" /></Box></ScrollButton>
          <VTrack><Thumb /></VTrack>
          <ScrollButton aria-label="Scroll down"><Caret c="#222" /></ScrollButton>
        </VScroll>
      </Work>
      <SheetBar>
        <SheetNav>
          <button aria-label="Previous sheet"><Box w={5} h={5}><path d="M4 0v5L1 2.500z" fill="#999" /></Box></button>
          <button aria-label="Next sheet"><Box w={5} h={5}><path d="M1 0v5l3-2.500z" fill="#999" /></Box></button>
        </SheetNav>
        <SheetTab>Sheet1</SheetTab>
        <AddSheet aria-label="New sheet"><Box w={12} h={12}><circle cx="6" cy="6" r="5" stroke="#f1f1f1" /><path d="M6 3.300v5.400M3.300 6h5.400" stroke="#f1f1f1" strokeWidth="1.400" /></Box></AddSheet>
        <HScroll>
          <Grip><Box w={2} h={7}><path d="M1 0v7" stroke="#e0e0e0" strokeDasharray="1 2" strokeWidth="1.500" /></Box></Grip>
          <ScrollButton aria-label="Scroll left"><Box w={3} h={5}><path d="M3 0v5L0 2.500z" fill="#222" /></Box></ScrollButton>
          <HTrack><HThumb /></HTrack>
          <ScrollButton aria-label="Scroll right"><Box w={3} h={5}><path d="M0 0v5l3-2.500z" fill="#222" /></Box></ScrollButton>
        </HScroll>
      </SheetBar>
      <StatusBar>
        <span>Ready</span>
        <MacroButton aria-label="Record macro"><Box w={9} h={9}><path d="M.5 2.500h8v6h-8z" stroke="#e0e0e0" /><path d="M2 4.500h5M2 6.500h5M3.500 3v5M6 3v5" stroke="#e0e0e0" strokeWidth=".8" /><circle cx="2.500" cy="1.800" r="1.800" fill="#fff" /></Box></MacroButton>
        <Views>
          <ViewButton $on aria-label="Normal view"><Box w={9} h={9}><path d="M.5.5h8v8h-8zM.5 3.200h8M.5 5.800h8M3.200.5v8M5.800.5v8" stroke="#f1f1f1" strokeWidth=".9" /></Box></ViewButton>
          <ViewButton aria-label="Page layout view"><Box w={9} h={9}><path d="M.5.5h8v8h-8zM2.500 2.500h4v4h-4zM3.500 4h2" stroke="#ddd" strokeWidth=".9" /></Box></ViewButton>
          <ViewButton aria-label="Page break view"><Box w={9} h={9}><path d="M0 0h4v6H0zM5 0h2v6H5z" fill="#f1f1f1" /><path d="M8.500 0v8.500H0" stroke="#ddd" strokeWidth=".9" /></Box></ViewButton>
        </Views>
        <ZoomStep aria-label="Zoom out"><Box w={5} h={5}><path d="M.5 2.500h4" stroke="#fff" strokeWidth="1.300" /></Box></ZoomStep>
        <Zoom type="range" min="0" max="100" defaultValue="50" aria-label="Zoom" />
        <ZoomStep aria-label="Zoom in"><Box w={5} h={5}><path d="M0 2.500h5M2.500 0v5" stroke="#fff" strokeWidth="1.300" /></Box></ZoomStep>
        <Percent>100%</Percent>
      </StatusBar>
      <TaskBar>
        <System>
          <SystemButton aria-label="Start"><Box w={12} h={12}><path d="M0 1.700l5-.7v4.600H0zM5.800.9L12 0v5.600H5.800zM0 6.400h5V11l-5-.7zM5.800 6.400H12V12l-6.200-.9z" fill="#fff" /></Box></SystemButton>
          <SystemButton aria-label="Cortana"><Box w={12} h={12}><circle cx="6" cy="6" r="4.500" stroke="#fff" strokeWidth="1.400" /></Box></SystemButton>
          <SystemButton aria-label="Task view"><Box w={14} h={12}><path d="M3.500 1.500h7v9h-7zM2 2.500H.5v7H2M12 2.500h1.500v7H12" stroke="#fff" /></Box></SystemButton>
        </System>
        <TaskIcons />
        <Clock><span>4:09 PM</span><span>1/8/2018</span></Clock>
      </TaskBar>
    </Shell>
  );
}
